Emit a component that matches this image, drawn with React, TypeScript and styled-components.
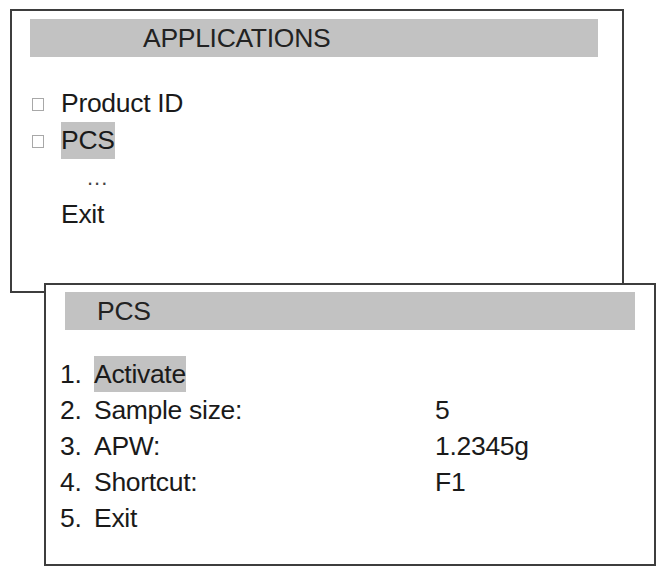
import styled, { createGlobalStyle } from 'styled-components';

const GlobalStyle = createGlobalStyle`
  html, body {
    margin: 0;
    padding: 0;
    background: #ffffff;
  }
  body {
    font-family: "Liberation Sans", Arial, sans-serif;
    color: #1a1a1a;
  }
`;

const applications = [
  { label: 'Product ID', selected: false },
  { label: 'PCS', selected: true },
];

const pcsOptions = [
  { num: '1.', name: 'Activate', value: '', selected: true },
  { num: '2.', name: 'Sample size:', value: '5', selected: false },
  { num: '3.', name: 'APW:', value: '1.2345g', selected: false },
  { num: '4.', name: 'Shortcut:', value: 'F1', selected: false },
  { num: '5.', name: 'Exit', value: '', selected: false },
];

const App = () => {
  return (
    <Page>
      <GlobalStyle />
      <Window $width={614} $height={284} $pad="8px 24px 0 18px">
        <TitleBar $indent={113}>APPLICATIONS</TitleBar>
        <MenuList>
          {applications.map((app) => (
            <MenuRow key={app.label}>
              <Checkbox />
              <Label $selected={app.selected}>{app.label}</Label>
            </MenuRow>
          ))}
          <MenuRow>
            <Spacer />
            <Dots>...</Dots>
          </MenuRow>
          <MenuRow>
            <Spacer />
            <Label>Exit</Label>
          </MenuRow>
        </MenuList>
      </Window>
      <Overlay $width={612} $height={283} $pad="7px 19px 0 14px">
        <TitleBar $indent={32} $shift={5}>PCS</TitleBar>
        <OptionList>
          {pcsOptions.map((opt) => (
            <OptionRow key={opt.num}>
              <span>{opt.num}</span>
              <span>
                <Label $selected={opt.selected}>{opt.name}</Label>
              </span>
              <span>{opt.value}</span>
            </OptionRow>
          ))}
        </OptionList>
      </Overlay>
    </Page>
  );
};

const Page = styled.div`
  display: flex;
  flex-direction: column;
  align-items: flex-start;
  padding: 9px 0 0 10px;
`;

const Window = styled.div<{ $width: number; $height: number; $pad: string }>`
  box-sizing: border-box;
  width: ${(p) => p.$width}px;
  height: ${(p) => p.$height}px;
  border: 2px solid #3d3d3d;
  padding: ${(p) => p.$pad};
  background: #ffffff;
  font-size: 26.5px;
  letter-spacing: -0.3px;
`;

const Overlay = styled(Window)`
  position: relative;
  margin: -10px 0 0 34px;
`;

const TitleBar = styled.div<{ $indent: number; $shift?: number }>`
  height: 38px;
  line-height: 38px;
  margin-left: ${(p) => p.$shift || 0}px;
  padding-left: ${(p) => p.$indent}px;
  background: #c2c2c2;
  color: #222222;
`;

const MenuList = styled.div`
  margin-top: 28px;
  display: flex;
  flex-direction: column;
`;

const MenuRow = styled.div`
  display: flex;
  align-items: center;
  height: 37px;
  line-height: 37px;
`;

const Checkbox = styled.span`
  box-sizing: border-box;
  width: 12px;
  height: 13px;
  margin: 2px 17px 0 2px;
  border: 1px solid #a8a8a8;
`;

const Spacer = styled.span`
  width: 31px;
`;

const Label = styled.span<{ $selected?: boolean }>`
  display: inline-block;
  background: ${(p) => (p.$selected ? '#c2c2c2' : 'transparent')};
`;

const Dots = styled.span`
  margin-left: 26px;
  font-size: 22px;
  letter-spacing: 1px;
  color: #444;
`;

const OptionList = styled.div`
  margin-top: 26px;
  display: flex;
  flex-direction: column;
`;

const OptionRow = styled.div`
  display: grid;
  grid-template-columns: 34px 341px 1fr;
  height: 36px;
  line-height: 36px;
  white-space: pre;
`;

export default App;
